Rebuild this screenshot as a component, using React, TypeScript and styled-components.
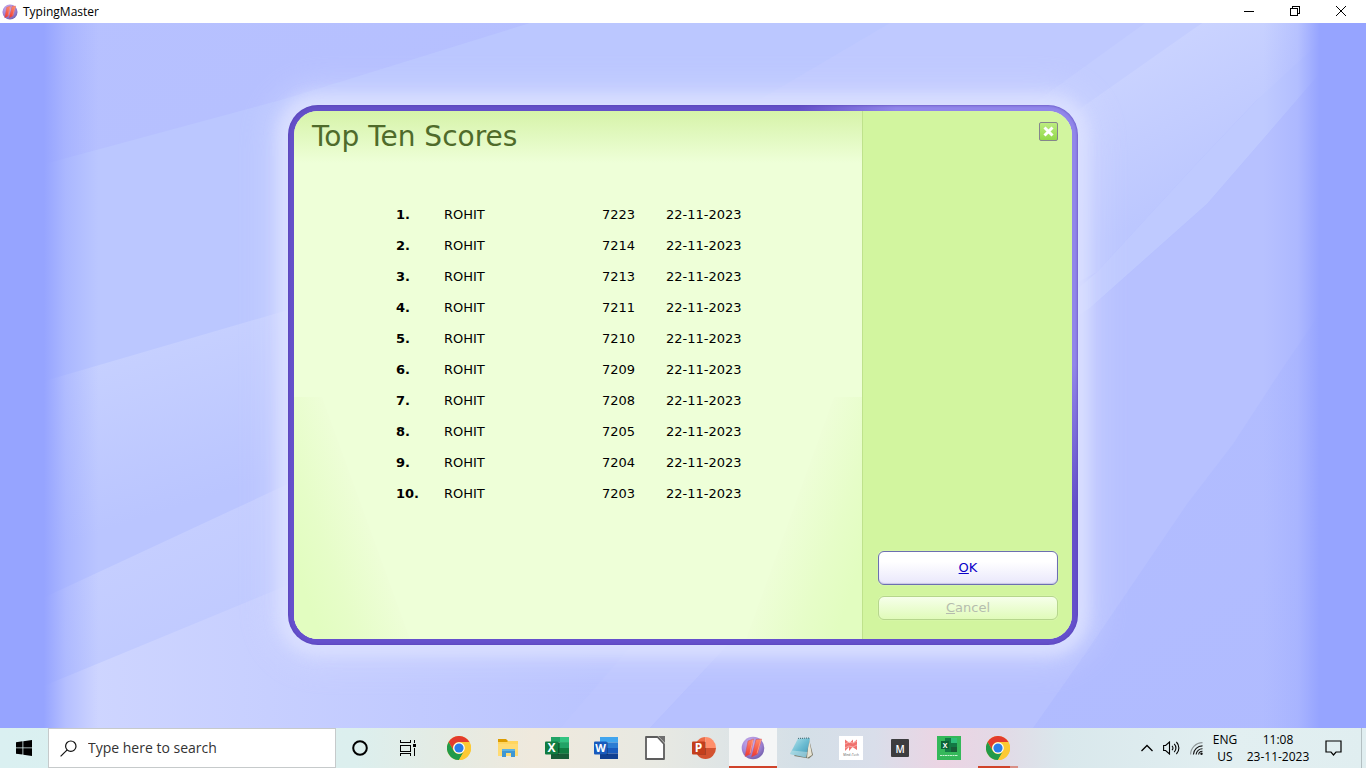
import React from 'react';
import styled, { createGlobalStyle, css } from 'styled-components';

const uiFont = '"Open Sans", "Noto Sans", sans-serif';
const dialogFont = '"DejaVu Sans", sans-serif';

const GlobalStyle = createGlobalStyle`
  *, *::before, *::after { box-sizing: border-box; }
  body { margin: 0; font-family: ${uiFont}; color: #000; }
  button { margin: 0; padding: 0; border: 0; background: none; font: inherit; color: inherit; cursor: pointer; }
  svg { display: block; }
`;

const Desktop = styled.div`
  display: flex;
  flex-direction: column;
  min-height: 100vh;
`;

/* ---------- window title bar ---------- */

const TitleBar = styled.header`
  display: flex;
  align-items: center;
  height: 23px;
  padding: 0 2px;
  background: #fff;
`;

const WindowTitle = styled.span`
  flex: 1;
  margin-left: 5px;
  font: 12px/16px ${uiFont};
`;

const WindowButton = styled.button`
  display: grid;
  place-items: center;
  width: 46px;
  height: 23px;
  padding-bottom: 2px;
`;

/* ---------- client area ---------- */

const Stage = styled.main`
  position: relative;
  display: flex;
  flex: 1;
  align-items: center;
  justify-content: center;
  padding: 24px 24px 26px;
  overflow: hidden;
`;

const Backdrop = styled.svg`
  position: absolute;
  inset: 0;
  width: 100%;
  height: 100%;
`;

const DialogFrame = styled.section`
  position: relative;
  display: flex;
  flex: 0 1 790px;
  min-height: 540px;
  padding: 6px;
  border-radius: 30px;
  font: 13px/16px ${dialogFont};
  background:
    radial-gradient(ellipse 280px 400px at top right, #9186ea 65%, transparent 100%),
    linear-gradient(#6450c8, #6550cc);
  box-shadow:
    0 0 14px 11px rgba(220, 225, 255, 0.8),
    0 0 34px 18px rgba(214, 220, 255, 0.6),
    inset 0 0 3px #5540b0;
`;

const DialogBody = styled.div`
  display: flex;
  flex: 1;
  overflow: hidden;
  border-radius: 24px;
  background: #eeffd8;
`;

const ScorePane = styled.div`
  position: relative;
  flex: 1;
  background: linear-gradient(#d6f3a9, #eeffd8 52px);
`;

const CornerShade = styled.svg<{ $side: 'left' | 'right' }>`
  position: absolute;
  bottom: 0;
  ${({ $side }) => ($side === 'left' ? css`left: 0;` : css`right: 0; transform: scaleX(-1);`)}
`;

const DialogTitle = styled.h1`
  margin: 0;
  padding: 10px 18px 0;
  font-size: 28px;
  line-height: 32px;
  font-weight: 400;
  color: #4f6b2b;
`;

const ScoreTable = styled.table`
  position: relative;
  margin: 47px 0 0 102px;
  border-collapse: collapse;
  table-layout: fixed;
  width: 350px;
`;

const ScoreRow = styled.tr`
  height: 31px;
`;

const Rank = styled.th`
  width: 48px;
  padding: 0;
  text-align: left;
`;

const Cell = styled.td<{ $width: number }>`
  width: ${({ $width }) => $width}px;
  padding: 0;
`;

const ActionPane = styled.aside`
  display: flex;
  flex-direction: column;
  width: 210px;
  padding: 11px 14px 19px 15px;
  border-left: 1px solid #bfe28c;
  background: #d2f59f;
`;

const CloseButton = styled.button`
  display: grid;
  place-items: center;
  align-self: flex-end;
  width: 19px;
  height: 19px;
  margin-bottom: auto;
  border: 1px solid #85868c;
  border-radius: 2px;
  background: linear-gradient(#bcec80, #93d94a);
`;

const DialogButton = styled.button<{ $primary?: boolean }>`
  width: 180px;
  height: ${({ $primary }) => ($primary ? 34 : 24)}px;
  border-radius: 6px;
  ${({ $primary }) =>
    $primary
      ? css`
          margin-bottom: 11px;
          border: 1px solid #6c6fb0;
          color: #0a00c8;
          background: linear-gradient(#fff 30%, #e9e7fb);
          box-shadow: inset 0 -1px 1px #c9c8e6, 0 0 1px #fff;
        `
      : css`
          border: 1px solid #b6d68c;
          color: #b5bcae;
          background: linear-gradient(#f6ffea, #e0fbb9);
          box-shadow: 0 0 1px #f4ffe2;
        `}
`;

/* ---------- taskbar ---------- */

const Taskbar = styled.footer`
  display: flex;
  height: 40px;
  background: linear-gradient(
    90deg, #daf0f1 0%, #dcefee 26%, #e5ebe3 33%, #efe9dd 39%, #e8e9e2 48%, #dde4e6 54%,
    #d4dfe7 59%, #d9deea 64%, #ecd4e3 69%, #e3d9e6 73%, #d9e8ec 78%, #e2eff1 90%, #e0eef0 100%
  );
`;

const TaskbarButton = styled.button`
  display: grid;
  place-items: center;
  width: 48px;
  height: 40px;
`;

const SearchBox = styled.label`
  display: flex;
  align-items: center;
  flex: 0 1 288px;
  padding: 0 12px 0 11px;
  border: 1px solid #c6cacb;
  background: #fff;
`;

const SearchInput = styled.input`
  flex: 1;
  min-width: 0;
  margin-left: 11px;
  padding: 0;
  border: 0;
  outline: 0;
  background: none;
  font: 14px/20px ${uiFont};
  &::placeholder { color: #333; opacity: 1; }
`;

const AppList = styled.nav`
  display: flex;
  gap: 1px;
  margin-left: 3px;
`;

const AppButton = styled(TaskbarButton)<{ $state?: 'active' | 'running' }>`
  position: relative;
  background: ${({ $state }) => ($state === 'active' ? '#f5f6f6' : 'none')};
  ${({ $state }) =>
    $state &&
    css`
      &::after {
        content: '';
        position: absolute;
        inset: ${$state === 'active' ? 'auto 0 0 0' : 'auto 4px 0 4px'};
        height: 2px;
        background: ${$state === 'active'
          ? '#d0432a'
          : 'linear-gradient(90deg, #d0432a 32px, #d98f86 32px)'};
      }
    `}
`;

const Tray = styled.div`
  display: flex;
  align-items: center;
  margin-left: auto;
  padding-right: 4px;
`;

const TrayButton = styled.button<{ $width: number }>`
  display: grid;
  place-items: center;
  width: ${({ $width }) => $width}px;
  height: 40px;
  font: 12px/17px ${uiFont};
  text-align: center;
  white-space: pre-line;
`;

const ShowDesktop = styled.button`
  width: 1px;
  height: 40px;
  margin-left: 9px;
  background: #b3bfc2;
`;

/* ---------- drawings ---------- */

const TypingMasterIcon = ({ size }: { size: number }) => (
  <svg width={size} height={size} viewBox="0 0 24 24" aria-hidden="true">
    <defs>
      <radialGradient id={`tm${size}`} cx="40%" cy="30%" r="70%">
        <stop offset="0" stopColor="#cdb6f0" />
        <stop offset=".6" stopColor="#a588d8" />
        <stop offset="1" stopColor="#7763b0" />
      </radialGradient>
      <linearGradient id={`tr${size}`} x1="0" y1="0" x2="0" y2="1">
        <stop offset="0" stopColor="#ff8d6b" />
        <stop offset="1" stopColor="#f0382f" />
      </linearGradient>
    </defs>
    <circle cx="12" cy="12" r="11.3" fill={`url(#tm${size})`} />
    <path d="M7 5 12.500 3 9.500 18 4 20.500Z M15 3.500l5.500-.5L16.500 18 10.500 21Z" fill={`url(#tr${size})`} stroke="#cc4a60" strokeWidth=".5" />
    <path d="M12 3.500 9 17.500M20 3.500 16 17.500" stroke="#ffb09a" strokeWidth=".7" />
  </svg>
);

const ChromeIcon = () => (
  <svg width="24" height="24" viewBox="0 0 24 24" aria-hidden="true">
    <circle cx="12" cy="12" r="12" fill="#fcc934" />
    <path d="M1.6 6A12 12 0 0 1 22.4 6H12a6 6 0 0 0-5.2 9Z" fill="#e33b2e" />
    <path d="M1.6 6A12 12 0 0 0 12 24l5.2-9A6 6 0 0 1 6.8 15Z" fill="#229a49" />
    <path d="M22.4 6A12 12 0 0 1 12 24l5.2-9A6 6 0 0 0 12 6Z" fill="#fcc934" />
    <circle cx="12" cy="12" r="5.8" fill="#fff" />
    <circle cx="12" cy="12" r="4.6" fill="#2b7de9" />
  </svg>
);

const FolderIcon = () => (
  <svg width="22" height="20" viewBox="0 0 22 20" aria-hidden="true">
    <path d="M1 1h8l2 2v4H1Z" fill="#dc9b00" />
    <path d="M1 4h9l1-1h10v15H1Z" fill="#ffd55f" />
    <path d="M1 6h20v12H1Z" fill="#ffdb73" />
    <path d="M5 19v-8h13v8h-4v-4H9v4Z" fill="#3f97d3" />
    <path d="M5 11h13v2H5Z" fill="#5bb2e6" />
  </svg>
);

type OfficeProps = { letter: string; tile: string; stripes: string[]; round?: boolean };

const OfficeIcon = ({ letter, tile, stripes, round }: OfficeProps) => (
  <svg width="24" height="24" viewBox="0 0 24 24" aria-hidden="true">
    {round ? (
      <g>
        <path d="M13.500 1a10.500 11 0 0 0-10.500 11h10.500Z" fill={stripes[0]} />
        <path d="M13.500 1A10.500 11 0 0 1 24 12H13.500Z" fill={stripes[1]} />
        <path d="M3 12a10.500 11 0 0 0 21 0Z" fill={stripes[2]} />
      </g>
    ) : (
      stripes.map((c, i) => (
        <rect key={i} x="6" y={1 + i * 5.5} width="18" height="5.5" fill={c} />
      ))
    )}
    {letter === 'X' && (
      <g>
        <path d="M15 1h9v5.500h-9Z" fill="#33c481" />
        <path d="M15 6.500h9V12h-9Z" fill="#21a366" />
        <path d="M15 12h9v5.500h-9Z" fill="#107c41" />
      </g>
    )}
    <path d="M12 6h2v13H6v-1h6Z" fill="#000" opacity=".2" />
    <rect x="0" y="5.500" width="13" height="13" rx="1" fill={tile} />
    <text x="6.500" y="16" textAnchor="middle" fontFamily="Open Sans, sans-serif" fontWeight="700" fontSize={letter === 'W' ? 11 : 12} fill="#fff">
      {letter}
    </text>
  </svg>
);

const DocumentIcon = () => (
  <svg width="20" height="24" viewBox="0 0 20 24" aria-hidden="true">
    <path d="M2 1h10.500L19 8v15H1V1Z" fill="#fff" stroke="#5d5d5d" strokeWidth="1.800" strokeLinejoin="round" />
    <path d="M13 0h7v7Z" fill="#6e6e6e" />
  </svg>
);

const NotepadIcon = () => (
  <svg width="24" height="24" viewBox="0 0 24 24" aria-hidden="true">
    <defs>
      <linearGradient id="pad" x1="0" y1="0" x2="1" y2="1">
        <stop offset="0" stopColor="#bfe7ee" />
        <stop offset=".5" stopColor="#6dbdd2" />
        <stop offset="1" stopColor="#3f93b3" />
      </linearGradient>
    </defs>
    <path d="m19 3 4 16-4 3.500L4 20Z" fill="#7d7968" />
    <path d="m19 3 3 16-5 3Z" fill="#e8e5d5" />
    <path d="M8 2.500 20 2 16 21.500 0 18Z" fill="url(#pad)" />
    <path d="M2 14.500 17.500 16l-1.500 5.500L0 18Z" fill="#e5f2f2" opacity=".4" />
    <path d="M8 2.500 20 2" stroke="#53747d" strokeWidth="1.200" strokeDasharray="1 1" />
  </svg>
);

const TypingTestIcon = () => (
  <svg width="24" height="24" viewBox="0 0 24 24" aria-hidden="true">
    <path d="M0 0h24v24H0Z" fill="#fff" />
    <path d="M6 3.500 10.500 7 14 3.500V7l4-3.500V14l-4.500-3-3.500 4v-4l-4 4Z" fill="#f0716e" />
    <path d="m6 8 4-2 4 1 4-2M6 12l4-2 4 1 4-2" fill="none" stroke="#fbb9b4" strokeWidth=".8" />
    <text x="12" y="20" textAnchor="middle" fontFamily="Open Sans, sans-serif" fontSize="3" fill="#555">Mind+Tech</text>
  </svg>
);

const MIcon = () => (
  <svg width="18" height="18" viewBox="0 0 18 18" aria-hidden="true">
    <rect width="18" height="18" rx="1" fill="#3d3d3f" />
    <text x="9" y="14" textAnchor="middle" fontFamily="Open Sans, sans-serif" fontWeight="600" fontSize="10" fill="#fff">M</text>
  </svg>
);

const ExcelTileIcon = () => (
  <svg width="24" height="24" viewBox="0 0 24 24" aria-hidden="true">
    <path d="M0 0h24v24H0Z" fill="#35b85a" />
    <path d="M8 2h12v14H8Z" fill="#127944" />
    <path d="M14 2h6v5h-6Z" fill="#2fbf7a" />
    <path d="M14 11h6v5h-6Z" fill="#185c37" />
    <rect x="4" y="5" width="8" height="8" fill="#0c6336" />
    <text x="8" y="12" textAnchor="middle" fontFamily="Open Sans, sans-serif" fontWeight="700" fontSize="7" fill="#fff">X</text>
    <path d="M3 19.500h18" stroke="#c9f0d2" strokeWidth="1" strokeDasharray="2 .5" />
  </svg>
);

/* Soft diagonal light beams behind the dialog. */
const LightBeams = () => (
  <Backdrop viewBox="0 23 1366 705" preserveAspectRatio="none" aria-hidden="true">
    <defs>
      <linearGradient id="sky" x1="0" y1="0" x2="1" y2="1">
        <stop offset="0" stopColor="#b7c1ff" />
        <stop offset="1" stopColor="#b0bbff" />
      </linearGradient>
      <linearGradient id="edge" x1="0" y1="0" x2="1" y2="0">
        <stop offset="0" stopColor="#96a4ff" />
        <stop offset=".032" stopColor="#96a4ff" />
        <stop offset=".048" stopColor="#96a4ff" stopOpacity=".45" />
        <stop offset=".072" stopColor="#96a4ff" stopOpacity="0" />
        <stop offset=".925" stopColor="#96a4ff" stopOpacity="0" />
        <stop offset=".95" stopColor="#96a4ff" stopOpacity=".3" />
        <stop offset=".966" stopColor="#96a4ff" />
        <stop offset="1" stopColor="#96a4ff" />
      </linearGradient>
      <linearGradient id="leftBeam" gradientUnits="userSpaceOnUse" x1="150" y1="345" x2="200" y2="500">
        <stop offset="0" stopColor="#c6d0ff" />
        <stop offset="1" stopColor="#bac5ff" />
      </linearGradient>
      <linearGradient id="lowBeam" gradientUnits="userSpaceOnUse" x1="150" y1="545" x2="195" y2="640">
        <stop offset="0" stopColor="#c5ceff" />
        <stop offset="1" stopColor="#c0caff" />
      </linearGradient>
      <linearGradient id="cornerBeam" gradientUnits="userSpaceOnUse" x1="90" y1="728" x2="600" y2="728">
        <stop offset="0" stopColor="#ced5ff" />
        <stop offset="1" stopColor="#bac4ff" />
      </linearGradient>
      <linearGradient id="topBeam" gradientUnits="userSpaceOnUse" x1="1130" y1="60" x2="1200" y2="190">
        <stop offset="0" stopColor="#cad3ff" />
        <stop offset="1" stopColor="#bcc7ff" />
      </linearGradient>
    </defs>
    <path d="M0 23h1366v705H0Z" fill="url(#sky)" />
    <path d="M0 176 288 98 530 23H1366L800 400 640 640H0Z" fill="#bbc7ff" />
    <path d="M0 394 288 310 500 360V640H0Z" fill="url(#leftBeam)" />
    <path d="M0 618 288 484 640 636 560 728H0Z" fill="url(#lowBeam)" />
    <path d="M0 704 288 585 640 636 560 728H0Z" fill="url(#cornerBeam)" />
    <path d="M560 728 640 636 800 500 728 645 650 728Z" fill="#bdc6ff" />
    <path d="M890 23h255L1060 87 900 200 640 170Z" fill="#bfc9ff" />
    <path d="M1145 23h57L1090 108 950 200 900 200Z" fill="#c3cdff" />
    <path d="M1202 23H1366L1257 100 1200 160 1097 272 950 350 950 200Z" fill="url(#topBeam)" />
    <path d="M1366 0 1257 100 1200 160 1097 272 950 400 1090 308 1207 204 1297 100 1366 20Z" fill="#bfcaff" />
    <path d="M650 728 728 645 900 440 1090 308 1207 204 1297 100 1366 20V235L1310 328 1280 372 1233 444 1187 504 1083 657 1033 728Z" fill="#b7c1ff" />
    <path d="M0 23h1366v705H0Z" fill="url(#edge)" />
  </Backdrop>
);

const CornerDrawing = ({ side }: { side: 'left' | 'right' }) => (
  <CornerShade $side={side} width="116" height="242" viewBox="0 0 116 242" aria-hidden="true">
    <defs>
      <linearGradient id={`shade-${side}`} gradientUnits="userSpaceOnUse" x1="12" y1="200" x2="94" y2="170">
        <stop offset="0" stopColor="#e2fdc0" />
        <stop offset=".4" stopColor="#e6fdc8" />
        <stop offset="1" stopColor="#eefed8" />
      </linearGradient>
    </defs>
    <path d="M0 0h28l88 242H0Z" fill={`url(#shade-${side})`} />
  </CornerShade>
);

/* ---------- data ---------- */

const scores = [7223, 7214, 7213, 7211, 7210, 7209, 7208, 7205, 7204, 7203];

const apps: { name: string; icon: React.ReactNode; state?: 'active' | 'running' }[] = [
  { name: 'Chrome', icon: <ChromeIcon /> },
  { name: 'File Explorer', icon: <FolderIcon /> },
  { name: 'Excel', icon: <OfficeIcon letter="X" tile="#107c41" stripes={['#21a366', '#107c41', '#0d6a38', '#185c37']} /> },
  { name: 'Word', icon: <OfficeIcon letter="W" tile="#185abd" stripes={['#41a5ee', '#2b7cd3', '#185abd', '#103f91']} /> },
  { name: 'LibreOffice', icon: <DocumentIcon /> },
  { name: 'PowerPoint', icon: <OfficeIcon letter="P" tile="#c43e1c" stripes={['#ed6c47', '#ff8f6b', '#d35230']} round /> },
  { name: 'TypingMaster', icon: <TypingMasterIcon size={24} />, state: 'active' },
  { name: 'Notepad', icon: <NotepadIcon /> },
  { name: 'Typing test', icon: <TypingTestIcon /> },
  { name: 'M', icon: <MIcon /> },
  { name: 'Excel lessons', icon: <ExcelTileIcon /> },
  { name: 'Chrome window', icon: <ChromeIcon />, state: 'running' },
];

export default function App() {
  return (
    <Desktop>
      <GlobalStyle />
      <TitleBar>
        <TypingMasterIcon size={16} />
        <WindowTitle>TypingMaster</WindowTitle>
        <WindowButton aria-label="Minimize">
          <svg width="10" height="10" shapeRendering="crispEdges"><path d="M0 5h10v1H0Z" /></svg>
        </WindowButton>
        <WindowButton aria-label="Restore">
          <svg width="10" height="10" fill="none" stroke="#000" shapeRendering="crispEdges">
            <path d="M.5 2.500h7v7h-7ZM2.500 2.500v-2h7v7h-2" />
          </svg>
        </WindowButton>
        <WindowButton aria-label="Close">
          <svg width="10" height="10" stroke="#000"><path d="m0 0 10 10M10 0 0 10" /></svg>
        </WindowButton>
      </TitleBar>

      <Stage>
        <LightBeams />
        <DialogFrame role="dialog" aria-labelledby="dialog-title">
          <DialogBody>
            <ScorePane>
              <CornerDrawing side="left" />
              <CornerDrawing side="right" />
              <DialogTitle id="dialog-title">Top Ten Scores</DialogTitle>
              <ScoreTable>
                <tbody>
                  {scores.map((score, i) => (
                    <ScoreRow key={score}>
                      <Rank scope="row">{i + 1}.</Rank>
                      <Cell $width={158}>ROHIT</Cell>
                      <Cell $width={64}>{score}</Cell>
                      <Cell $width={80}>22-11-2023</Cell>
                    </ScoreRow>
                  ))}
                </tbody>
              </ScoreTable>
            </ScorePane>
            <ActionPane>
              <CloseButton aria-label="Close scores">
                <svg width="11" height="11" stroke="#fff" strokeWidth="3"><path d="m1.500 1.500 8 8M9.500 1.500l-8 8" /></svg>
              </CloseButton>
              <DialogButton $primary><u>O</u>K</DialogButton>
              <DialogButton disabled><u>C</u>ancel</DialogButton>
            </ActionPane>
          </DialogBody>
        </DialogFrame>
      </Stage>

      <Taskbar>
        <TaskbarButton aria-label="Start">
          <svg width="16" height="16" viewBox="0 0 16 16"><path d="M0 2.200 6.500 1.300v6.200H0ZM7.300 1.200 16 0v7.500H7.300ZM0 8.300h6.500v6.300L0 13.700ZM7.300 8.300H16V16l-8.700-1.200Z" /></svg>
        </TaskbarButton>
        <SearchBox>
          <svg width="17" height="17" viewBox="0 0 17 17" fill="none" stroke="#111" strokeWidth="1.200" aria-hidden="true">
            <circle cx="10.800" cy="6.200" r="5.200" />
            <path d="M7.200 9.900.6 16.400" />
          </svg>
          <SearchInput type="text" placeholder="Type here to search" aria-label="Type here to search" />
        </SearchBox>
        <TaskbarButton aria-label="Cortana">
          <svg width="16" height="16" fill="none" stroke="#000" strokeWidth="2"><circle cx="8" cy="8" r="6.800" /></svg>
        </TaskbarButton>
        <TaskbarButton aria-label="Task view">
          <svg width="16" height="16" fill="none" stroke="#000" shapeRendering="crispEdges">
            <path d="M.5 0v2.500h10V0M.5 5.500h10v6H.5ZM.5 16v-2.500h10V16M14.500 0v3M14.500 8v8" />
            <path d="M13 4h3v3h-3Z" fill="#000" stroke="none" />
          </svg>
        </TaskbarButton>
        <AppList aria-label="Pinned apps">
          {apps.map((app) => (
            <AppButton key={app.name} aria-label={app.name} $state={app.state}>
              {app.icon}
            </AppButton>
          ))}
        </AppList>
        <Tray>
          <TrayButton $width={24} aria-label="Show hidden icons">
            <svg width="12" height="8" fill="none" stroke="#000" strokeWidth="1.300"><path d="m.5 7 5.500-5.500L11.500 7" /></svg>
          </TrayButton>
          <TrayButton $width={24} aria-label="Volume">
            <svg width="17" height="14" viewBox="0 0 17 14" fill="none" stroke="#000" strokeWidth="1.100">
              <path d="M.6 4.500h2L6.500 1v12L2.600 9.500h-2ZM9 4.800a3 3 0 0 1 0 4.400M11.200 2.800a6 6 0 0 1 0 8.400M13.400 1a8.500 8.500 0 0 1 0 12" />
            </svg>
          </TrayButton>
          <TrayButton $width={26} aria-label="Network">
            <svg width="13" height="13" viewBox="0 0 13 13" fill="none" stroke="#111" strokeWidth="1.100">
              <path d="M.6 12.500A12 12 0 0 1 12.500.6" opacity=".4" />
              <path d="M3.400 12.500a9 9 0 0 1 9.100-8.600M6.100 12.500a6.300 6.300 0 0 1 6.400-5.800M8.600 12.500a3.800 3.800 0 0 1 3.900-3.200" />
              <circle cx="11.500" cy="11.800" r="1.200" fill="#111" stroke="none" />
            </svg>
          </TrayButton>
          <TrayButton $width={32}>{'ENG\nUS'}</TrayButton>
          <TrayButton $width={74}>{'11:08\n23-11-2023'}</TrayButton>
          <TrayButton $width={37} aria-label="Notifications">
            <svg width="17" height="16" fill="none" stroke="#000" strokeWidth="1.200"><path d="M1 1h15v11h-5l-2.500 3L6 12H1Z" /></svg>
          </TrayButton>
          <ShowDesktop aria-label="Show desktop" />
        </Tray>
      </Taskbar>
    </Desktop>
  );
}
